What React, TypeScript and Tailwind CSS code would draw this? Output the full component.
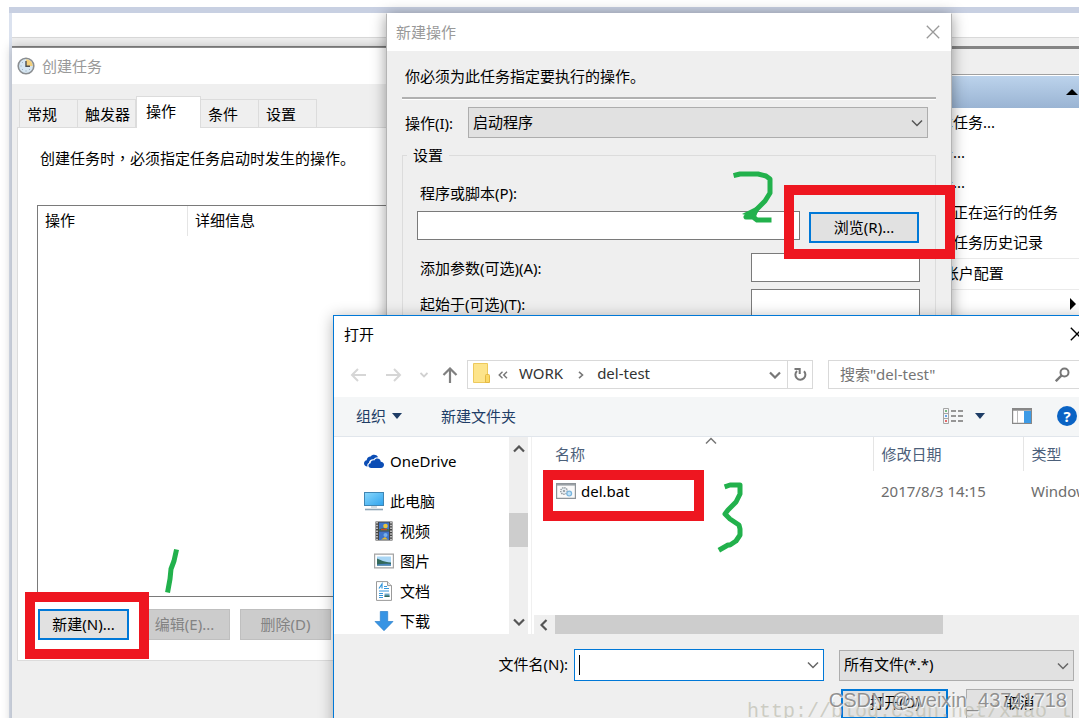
import type { ReactNode } from "react";

const tabs = ["常规", "触发器", "操作", "条件", "设置"];

const taskActions = ["创建基本任务...", "创建任务...", "导入任务...", "显示所有正在运行的任务", "启用所有任务历史记录"];

const files = [{ name: "del.bat", date: "2017/8/3 14:15", type: "Windows 批处理文件" }];

function Chevron({ className = "", width = 2 }: { className?: string; width?: number }) {
  return (
    <svg viewBox="0 0 12 8" className={`h-2 w-3 shrink-0 ${className}`} fill="none" stroke="currentColor" strokeWidth={width}>
      <path d="M1 1.5 6 6.5 11 1.5" />
    </svg>
  );
}

function CloseIcon({ className = "" }: { className?: string }) {
  return (
    <svg viewBox="0 0 14 14" className={`h-3.5 w-3.5 ${className}`} fill="none" stroke="currentColor" strokeWidth="1.3">
      <path d="M.8.8 13.2 13.2M13.2.8.8 13.2" />
    </svg>
  );
}

function ClockIcon() {
  return (
    <svg viewBox="0 0 18 18" className="h-[18px] w-[18px] shrink-0">
      <circle cx="9" cy="9" r="7.8" fill="#d6e6f2" stroke="#8a8d90" strokeWidth="1.6" />
      <path d="M9 2.2A6.8 6.8 0 0 1 15.8 9H9z" fill="#f3cf7a" />
      <path d="M9 4v5.3h4" fill="none" stroke="#4c4f52" strokeWidth="1.4" />
      <path d="M3.5 9h1M9 14.5v-1M5 5l.7.7M5 13l.7-.7M13 13l-.7-.7" stroke="#8aa0b0" />
    </svg>
  );
}

function CloudIcon() {
  return (
    <svg viewBox="0 0 20 16" className="h-4 w-5" fill="#0b4db5">
      <path d="M3.6 13.5C1.200 13.500 0 12 0 10.300c0-1.700 1.200-2.900 2.700-3.100C2.800 4.900 4.500 3.500 6.600 3.500 8 1.200 12.500.8 14.200 4.300c-1.900-.4-3.700.5-4.500 1.900C7 5.800 5 7.600 5 9.800c-1.600.7-2.100 2.300-1.400 3.700z" />
      <path d="M7.200 15C5.600 15 4.400 14 4.400 12.600c0-1.300 1-2.200 2.200-2.300C6.600 8.200 8.500 6.900 10.300 7.400c1.500-2.900 6-2.300 6.500 1.300 1.900.1 3.200 1.300 3.200 3.100S18.700 15 17 15z" />
    </svg>
  );
}

function ComputerIcon() {
  return (
    <svg viewBox="0 0 20 20" className="h-5 w-5">
      <defs>
        <linearGradient id="screen" x1="0" y1="0" x2="1" y2="1">
          <stop offset="0" stopColor="#8ad8fc" />
          <stop offset="1" stopColor="#2ea3ee" />
        </linearGradient>
      </defs>
      <rect x=".5" y="1.500" width="19" height="13" fill="url(#screen)" stroke="#3f86b4" />
      <path d="M7 16h6" stroke="#c5d0d8" strokeWidth="1.500" />
      <path d="M1 18.500h18" stroke="#8ea5b5" strokeWidth="1.600" />
    </svg>
  );
}

function VideoIcon() {
  return (
    <svg viewBox="0 0 20 20" className="h-5 w-5">
      <path d="M1.500.5h17v19h-17z" fill="#454545" />
      <path d="M3 1v18M17 1v18" stroke="#d8d8d8" strokeWidth="1.600" strokeDasharray="1.500 1.300" />
      <path d="M5 1.500h10v8H5zM5 10.500h10v8.500H5z" fill="#3f74c8" />
      <circle cx="11.500" cy="5" r="2.300" fill="#e8c53c" />
      <path d="M5 8.500 9 7l6 1.500v1H5z" fill="#357a36" />
      <path d="M7 8.500h6" stroke="#c8442d" strokeWidth="1.500" />
      <circle cx="11.500" cy="14" r="2" fill="#77aee9" />
      <path d="M7 18.500 11 16l3 2.500z" fill="#e5b72f" />
    </svg>
  );
}

function PictureIcon() {
  return (
    <svg viewBox="0 0 20 16" className="h-4 w-5">
      <path d="M.6 1.100h18.800v13.800H.6z" fill="#fff" stroke="#a3a3a3" strokeWidth="1.200" />
      <path d="M3 3.500h14v9H3z" fill="#a9d6f5" />
      <path d="M3 5.500c3 1 6 3.500 14 4v3H3z" fill="#33695b" />
      <path d="M3 11.500c5-1 9-1 14-.5v1.500H3z" fill="#4c86c0" />
    </svg>
  );
}

function DocumentIcon() {
  return (
    <svg viewBox="0 0 20 20" className="h-5 w-5">
      <path d="M2.500.6h11l4 4v14.800h-15z" fill="#fff" stroke="#9a9a9a" />
      <path d="M13.500.6v4h4" fill="#e8e8e8" stroke="#9a9a9a" />
      <path d="M5 7.500 8 3v4.500M10 5.500h3M10 7.500h5M5 10h10M5 12.500h4M5 14.500h4M5 16.500h4" fill="none" stroke="#3396dc" strokeWidth="1.200" />
      <path d="M10.500 12.500h5V16h-5z" fill="#6ea9cb" />
      <path d="M10.500 14.500h5V16h-5z" fill="#336859" />
    </svg>
  );
}

function DownloadIcon() {
  return (
    <svg viewBox="0 0 20 20" className="h-5 w-5">
      <path d="M6.300.5h7.400v10H19L10 19.700 1 10.500h5.300z" fill="#3794e4" stroke="#2b80cb" strokeWidth=".7" />
    </svg>
  );
}

function BatchIcon() {
  return (
    <svg viewBox="0 0 20 16" className="h-4 w-5 shrink-0">
      <path d="M.6.6h18.800v14.800H.6z" fill="#fafafa" stroke="#8e9499" strokeWidth="1.200" />
      <path d="M1 1.800h18" stroke="#9aa0a5" strokeWidth="1.600" />
      <circle cx="8" cy="8" r="3.300" fill="#e9eef2" stroke="#9199a0" strokeWidth="1.400" strokeDasharray="1.400 .8" />
      <circle cx="8" cy="8" r="1.100" fill="#8c959c" />
      <circle cx="13.200" cy="10.600" r="2.400" fill="#c0e3f8" stroke="#79b5de" strokeWidth="1.200" />
    </svg>
  );
}

const places: { label: string; icon: ReactNode; root?: boolean }[] = [
  { label: "此电脑", icon: <ComputerIcon />, root: true },
  { label: "视频", icon: <VideoIcon /> },
  { label: "图片", icon: <PictureIcon /> },
  { label: "文档", icon: <DocumentIcon /> },
  { label: "下载", icon: <DownloadIcon /> },
];

// Main console window behind the dialogs, with its actions pane on the right
function ConsoleWindow() {
  return (
    <div className="ml-[9px] flex min-h-screen flex-col border-l-3 border-[#dbe2ef] bg-[#efefef]">
      <div className="-ml-[3px] h-1.5 bg-[#c8d0e2]" />
      <div className="h-[25px] border-b border-[#d9d9d9] bg-white" />
      <div className="mt-2 h-[3px] bg-[#848484]" />
      <aside className="mt-[25px] ml-[868px] border-t border-[#a0a0a0] bg-white">
        <div className="mt-px flex h-8 items-center justify-end bg-linear-to-b from-[#bcd3ec] to-[#9ab4d3] pr-px">
          <svg viewBox="0 0 12 6" className="h-1.5 w-3"><path d="M0 6 6 0l6 6z" /></svg>
        </div>
        <ul className="border-b border-[#eaeaea] pl-[13px]">
          {taskActions.map((action) => (
            <li key={action} className="h-[30px] leading-7 whitespace-nowrap">{action}</li>
          ))}
        </ul>
        <div className="h-[31px] border-b border-[#eaeaea] pl-[13px] leading-7 whitespace-nowrap">AT 服务帐户配置</div>
        <div className="flex h-7 items-center justify-end pr-[3px]">
          <svg viewBox="0 0 6 12" className="h-3 w-1.5"><path d="M0 0 6 6 0 12z" /></svg>
        </div>
      </aside>
    </div>
  );
}

function CreateTaskWindow() {
  return (
    <section className="absolute top-[47px] left-3 flex min-h-[700px] w-[640px] flex-col border-t border-[#8a8a8a] bg-[#efefef] shadow-[0_0_10px_rgba(0,0,0,0.25)]">
      <header className="flex h-9 items-center gap-[7px] bg-white pl-[5px] text-[#999]">
        <ClockIcon />
        <h1>创建任务</h1>
      </header>
      <div className="mt-3 flex items-end pl-[7px]" role="tablist">
        {tabs.map((tab) =>
          tab === "操作" ? (
            <button key={tab} role="tab" aria-selected="true" className="relative -mb-px h-8 border border-b-0 border-[#dcdcdc] bg-white pr-6 pb-1 pl-[9px]">
              {tab}
            </button>
          ) : (
            <button key={tab} role="tab" aria-selected="false" className="h-7 border border-b-0 border-l-0 border-[#dcdcdc] pr-5 pl-[7px] first:border-l nth-2:pr-[5px]">
              {tab}
            </button>
          ),
        )}
      </div>
      <div className="ml-[5px] border border-[#dcdcdc] bg-white py-5 pl-[19px]">
        <p className="pl-[3px]">
          创建任务时<span className="font-['Noto_Sans_CJK_TC',sans-serif]" lang="zh-Hant">，</span>必须指定任务启动时发生的操作。
        </p>
        <div className="mt-[37px] h-[392px] border border-[#7a7a7a]">
          <div className="flex h-[30px] items-start leading-7">
            <span className="h-full w-[150px] border-r border-[#e5e5e5] pl-[7px]">操作</span>
            <span className="pl-[7px]">详细信息</span>
          </div>
        </div>
        <div className="mt-3 flex gap-2.5 pl-px">
          <button className="h-[31px] w-[91px] border-2 border-[#0078d7] bg-[#e1e1e1] pb-0.5">新建(N)...</button>
          <button disabled className="h-[31px] w-[91px] border border-[#bfbfbf] bg-[#ccc] pb-0.5 text-[#838383]">编辑(E)...</button>
          <button disabled className="h-[31px] w-[91px] border border-[#bfbfbf] bg-[#ccc] pb-0.5 text-[#838383]">删除(D)</button>
        </div>
      </div>
    </section>
  );
}

function NewActionWindow() {
  return (
    <section className="absolute top-[13px] left-[386px] w-[566px] border border-[#b4b4b4] border-t-white bg-[#efefef] shadow-[0_2px_14px_rgba(0,0,0,0.4)]">
      <header className="flex h-[37px] items-center justify-between bg-white pr-[11px] pb-0.5 pl-[9px] text-[#999]">
        <h2>新建操作</h2>
        <button aria-label="关闭"><CloseIcon /></button>
      </header>
      <div className="px-[15px] pt-[15px]">
        <p className="pl-[3px]">你必须为此任务指定要执行的操作。</p>
        <div className="mt-[11px] h-[3px] border-t-2 border-b border-t-[#b0b0b0] border-b-white" />
        <div className="mt-[7px] flex items-center pr-2 pl-[3px]">
          <label htmlFor="action" className="w-[63px]">操作(I):</label>
          <div className="relative flex-1">
            <select id="action" className="h-[31px] w-full appearance-none border border-[#adadad] bg-[#e1e1e1] pb-0.5 pl-1">
              <option>启动程序</option>
            </select>
            <Chevron width={1.5} className="pointer-events-none absolute top-3 right-[5px] text-[#555]" />
          </div>
        </div>
        <fieldset className="mt-[7px] border border-[#dcdcdc] pr-4 pb-6 pl-[14px]">
          <legend className="-ml-2.5 px-1.5">设置</legend>
          <label htmlFor="program" className="mt-[18px] block pl-[3px]">程序或脚本(P):</label>
          <div className="mt-2 flex items-start gap-[9px]">
            <input id="program" className="h-[29px] min-w-0 flex-1 border border-[#7a7a7a] bg-white px-1" />
            <button className="mt-px h-[31px] w-[110px] border-2 border-[#0078d7] bg-[#e1e1e1] pb-0.5">浏览(R)...</button>
          </div>
          <div className="-mr-px mt-2.5 flex items-center justify-between pl-[3px]">
            <label htmlFor="args">添加参数(可选)(A):</label>
            <input id="args" className="h-[29px] w-[169px] border border-[#7a7a7a] bg-white px-1" />
          </div>
          <div className="-mr-px mt-[7px] flex items-center justify-between pl-[3px]">
            <label htmlFor="startin">起始于(可选)(T):</label>
            <input id="startin" className="h-[29px] w-[169px] border border-[#7a7a7a] bg-white px-1" />
          </div>
        </fieldset>
      </div>
    </section>
  );
}

function NavBar() {
  return (
    <div className="mt-[7px] flex h-[29px] items-center pl-4">
      <button aria-label="后退" className="text-[#d6d6d6]">
        <svg viewBox="0 0 16 14" className="h-3.5 w-4" fill="none" stroke="currentColor" strokeWidth="2"><path d="M8 1 2 7l6 6M2 7h14" /></svg>
      </button>
      <button aria-label="前进" className="ml-5 text-[#d6d6d6]">
        <svg viewBox="0 0 16 14" className="h-3.5 w-4" fill="none" stroke="currentColor" strokeWidth="2"><path d="m8 1 6 6-6 6M14 7H0" /></svg>
      </button>
      <button aria-label="最近浏览的位置" className="ml-[18px] text-[#d0d0d0]">
        <svg viewBox="0 0 8 6" className="h-1.5 w-2" fill="none" stroke="currentColor" strokeWidth="1.800"><path d="m.5 1 3.500 3.500L7.500 1" /></svg>
      </button>
      <button aria-label="上移" className="ml-[14px] text-[#808080]">
        <svg viewBox="0 0 16 16" className="h-4 w-4" fill="none" stroke="currentColor" strokeWidth="2.200"><path d="m1.500 8 6.500-6.500L14.500 8M8 2v14" /></svg>
      </button>
      <div className="ml-[9px] flex h-[29px] w-[346px] items-center border border-[#d9d9d9] pl-[5px] text-[#333]">
        <svg viewBox="0 0 17 20" className="mb-1 h-5 w-[17px]">
          <path d="M.5.5h14v19H.5z" fill="#fde48b" stroke="#edc95c" />
          <path d="M12.500 12.500q0-1 1-1h2q1 0 1 1v7h-4z" fill="#fbd966" stroke="#e5b944" />
        </svg>
        <svg viewBox="0 0 10 8" className="ml-2 h-2 w-2.5" fill="none" stroke="#777" strokeWidth="1.400"><path d="M4.500.8 1.200 4l3.300 3.200M9 .8 5.700 4 9 7.200" /></svg>
        <span className="ml-[11px] pb-1">WORK</span>
        <svg viewBox="0 0 6 8" className="ml-[15px] h-2 w-1.5" fill="none" stroke="#777" strokeWidth="1.600"><path d="M1 .8 4.500 4 1 7.200" /></svg>
        <span className="ml-[13px] pb-1">del-test</span>
        <button aria-label="以前的位置" className="ml-auto pr-1.5 text-[#777]"><Chevron width={2.2} /></button>
        <button aria-label="刷新" className="flex h-full w-[25px] items-center justify-center border-l border-[#d9d9d9] text-[#777]">
          <svg viewBox="0 0 14 15" className="h-[15px] w-3.5" fill="none" stroke="currentColor" strokeWidth="2">
            <path d="M11 4.200A5 5 0 1 1 4 4" />
            <path d="M1.500 2h5.200v5" />
          </svg>
        </button>
      </div>
      <div className="ml-[15px] flex h-[29px] min-w-0 flex-1 items-center border border-r-0 border-[#d9d9d9] pr-4 pl-[11px]">
        <input type="search" aria-label="搜索" placeholder={'搜索"del-test"'} className="min-w-0 flex-1 pb-0.5 placeholder:text-[#757575]" />
        <svg viewBox="0 0 15 15" className="h-[15px] w-[15px]" fill="none" stroke="#777" strokeWidth="2">
          <circle cx="9.500" cy="5.500" r="4" />
          <path d="M6.500 8.500.8 14.200" strokeWidth="2.400" />
        </svg>
      </div>
    </div>
  );
}

function Toolbar() {
  return (
    <div className="mt-2 flex h-10 items-center border-b border-[#e1e6ec] bg-[#f4f6f7] pr-[9px] pb-0.5 pl-[22px] text-[#1e3d66]">
      <button className="flex items-center gap-1.5">
        组织
        <svg viewBox="0 0 10 6" className="h-1.5 w-2.5" fill="currentColor"><path d="M0 0h10L5 6z" /></svg>
      </button>
      <button className="ml-[39px]">新建文件夹</button>
      <button aria-label="更改视图" className="ml-auto">
        <svg viewBox="0 0 20 16" className="h-4 w-5" fill="none" stroke="#777">
          <path d="M.5.5h5v15h-5zM.5 5.500h5M.5 10.500h5" stroke="#a5a5a5" />
          <path d="M8 3h5M15 3h5M8 8h5M15 8h5M8 13h5M15 13h5" strokeWidth="1.300" />
          <path d="M2 3h2" stroke="#4ba35d" strokeWidth="1.500" />
          <path d="M2 8h2" stroke="#3a8de0" strokeWidth="1.500" />
          <path d="M2 13h2" stroke="#e03a3a" strokeWidth="1.500" />
        </svg>
      </button>
      <button aria-label="更多选项" className="ml-3">
        <svg viewBox="0 0 10 6" className="h-1.5 w-2.5" fill="currentColor"><path d="M0 0h10L5 6z" /></svg>
      </button>
      <button aria-label="预览窗格" className="ml-[27px]">
        <svg viewBox="0 0 20 16" className="h-4 w-5">
          <path d="M.6.6h18.800v14.800H.6z" fill="#fff" stroke="#888" strokeWidth="1.200" />
          <path d="M0 1.700h20" stroke="#888" strokeWidth="2" />
          <path d="M5.500 3v12" stroke="#bbb" />
          <path d="M12 3h7v12h-7z" fill="#3d9be6" />
        </svg>
      </button>
      <button aria-label="帮助" className="ml-[25px] flex h-5 w-5 items-center justify-center rounded-full bg-[#0a63c4] font-bold text-white">?</button>
    </div>
  );
}

function Sidebar() {
  return (
    <nav className="w-[175px] shrink-0 pt-[14px]">
      <a href="#onedrive" className="flex h-5 items-center gap-1.5 pl-[30px]">
        <CloudIcon />
        OneDrive
      </a>
      <ul className="mt-[15px]">
        {places.map((place) => (
          <li key={place.label}>
            <a href={`#${place.label}`} className={place.root ? "flex h-[30px] items-center gap-1.5 pl-[30px]" : "flex h-[30px] items-center gap-1.5 pl-10"}>
              {place.icon}
              {place.label}
            </a>
          </li>
        ))}
      </ul>
    </nav>
  );
}

function FileList() {
  return (
    <div className="flex min-w-0 flex-1 flex-col overflow-hidden">
      <table className="w-full table-fixed text-left">
        <thead>
          <tr className="h-[34px] text-[#4c607a]">
            <th className="relative w-[339px] border-r border-[#e5e5e5] pl-[21px] font-normal">
              名称
              <Chevron width={1.5} className="absolute top-0 left-[171px] rotate-180 text-[#777]" />
            </th>
            <th className="w-[150px] border-r border-[#e5e5e5] pl-2 font-normal">修改日期</th>
            <th className="pl-2 font-normal">类型</th>
          </tr>
        </thead>
        <tbody>
          {files.map((file) => (
            <tr key={file.name} className="h-10 text-[#6d6d6d]">
              <td className="pl-[22px] text-black">
                <span className="flex items-center gap-[5px]">
                  <BatchIcon />
                  {file.name}
                </span>
              </td>
              <td className="pl-2">{file.date}</td>
              <td className="overflow-hidden pl-2 whitespace-nowrap">{file.type}</td>
            </tr>
          ))}
        </tbody>
      </table>
      <div className="mt-auto flex h-[19px] items-center bg-[#efefef] pl-1">
        <Chevron width={2.2} className="rotate-90 text-[#555]" />
        <div className="ml-[5px] h-full w-[388px] bg-[#cdcdcd]" />
      </div>
    </div>
  );
}

function OpenDialog() {
  return (
    <section className="absolute top-[315px] -right-2 left-[333px] border border-[#0078d7] bg-white shadow-[0_2px_14px_rgba(0,0,0,0.3)]">
      <header className="flex h-[37px] items-center justify-between pr-0.5 pb-0.5 pl-2.5">
        <h2>打开</h2>
        <button aria-label="关闭"><CloseIcon /></button>
      </header>
      <NavBar />
      <Toolbar />
      <div className="flex h-[197px]">
        <Sidebar />
        <div className="flex w-[19px] shrink-0 flex-col items-center bg-[#efefef] py-2">
          <Chevron width={2.2} className="rotate-180 text-[#555]" />
          <div className="mt-[60px] h-[34px] w-full bg-[#cdcdcd]" />
          <Chevron width={2.2} className="mt-auto text-[#555]" />
        </div>
        <div className="mr-0.5 w-1 shrink-0 border-r border-[#f0f0f0]" />
        <FileList />
      </div>
      <footer className="bg-[#efefef] pt-[15px] pr-3 pb-6">
        <div className="flex items-center justify-end">
          <label htmlFor="filename" className="pr-1.5 pb-0.5">文件名(N):</label>
          <div className="relative w-[250px]">
            <input id="filename" className="h-8 w-full border border-[#0078d7] bg-white pr-6 pl-1" />
            <span className="absolute top-1.5 left-[5px] h-5 w-px bg-black" />
            <Chevron width={1.5} className="absolute top-3 right-[5px] text-[#666]" />
          </div>
          <div className="relative ml-[15px] w-[235px]">
            <select aria-label="文件类型" className="h-[31px] w-full appearance-none border border-[#adadad] bg-[#e1e1e1] pb-0.5 pl-1">
              <option>所有文件(*.*)</option>
            </select>
            <Chevron width={1.5} className="pointer-events-none absolute top-3 right-[5px] text-[#666]" />
          </div>
        </div>
        <div className="mt-2 flex justify-end gap-[18px] pr-px">
          <button className="h-[30px] w-[107px] border-2 border-[#0078d7] bg-[#e1e1e1] pb-1">打开(O)</button>
          <button className="h-[30px] w-[107px] border border-[#adadad] bg-[#e1e1e1] pb-1">取消</button>
        </div>
      </footer>
    </section>
  );
}

// Red frames and hand-drawn step numbers
function StepMarks() {
  return (
    <svg className="pointer-events-none absolute top-0 left-0 h-full w-full" fill="none" aria-label="步骤 1 2 3">
      <g stroke="#ee1620" strokeWidth="10">
        <rect x="30" y="597" width="114" height="57" />
        <rect x="789" y="190" width="161" height="64" />
        <rect x="548" y="475" width="151" height="41" />
      </g>
      <g stroke="#22b14c" strokeWidth="5" strokeLinecap="square" strokeLinejoin="round">
        <path d="m176 552-2 9-3 8-1 10-2 11" />
        <path d="m736 175 4-1h18l8 2 4 3v14l-5 8-8 8-3 5-8 3h7l4 3h12" />
        <path d="m727 486 3-1h10v9l-4 8-8 8-3 4 5 5 9 6 1 4v6l-4 6-6 4h-2l-7 4" />
      </g>
      <path d="m742 214 16-8-2 12z" fill="#22b14c" />
    </svg>
  );
}

export default function App() {
  return (
    <main className="relative h-screen overflow-hidden bg-white pt-[7px] font-['Noto_Sans','Noto_Sans_CJK_SC',sans-serif] text-[15px] leading-5 text-black">
      <ConsoleWindow />
      <CreateTaskWindow />
      <NewActionWindow />
      <OpenDialog />
      <StepMarks />
      <p className="absolute -bottom-1.5 left-[747px] font-['Liberation_Mono',monospace] text-xl leading-6 whitespace-nowrap text-[#bdbdb0]/70">http://blog.csdn.net/xiao_l</p>
      <p className="absolute right-3 bottom-1.5 font-['Liberation_Sans',sans-serif] text-xl leading-6 whitespace-nowrap text-[#777]/80 [text-shadow:1px_1px_1px_#fff]">CSDN @weixin_43741718</p>
    </main>
  );
}
